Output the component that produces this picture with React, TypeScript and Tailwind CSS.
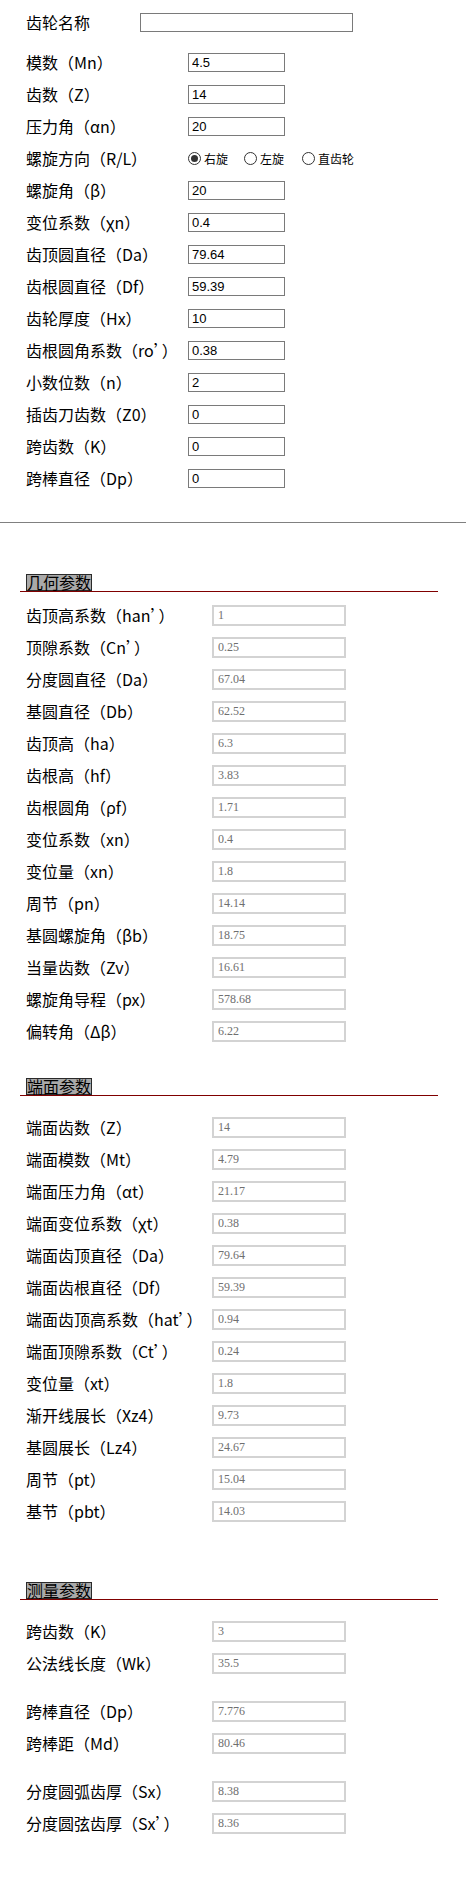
import React from "react";

const inputRows1: [string, string][] = [
  ["模数（Mn）", "4.5"],
  ["齿数（Z）", "14"],
  ["压力角（αn）", "20"],
];
const inputRows1b: [string, string][] = [
  ["螺旋角（β）", "20"],
  ["变位系数（χn）", "0.4"],
  ["齿顶圆直径（Da）", "79.64"],
  ["齿根圆直径（Df）", "59.39"],
  ["齿轮厚度（Hx）", "10"],
  ["齿根圆角系数（ro’）", "0.38"],
  ["小数位数（n）", "2"],
  ["插齿刀齿数（Z0）", "0"],
  ["跨齿数（K）", "0"],
  ["跨棒直径（Dp）", "0"],
];

const geo: [string, string][] = [
  ["齿顶高系数（han’）", "1"],
  ["顶隙系数（Cn’）", "0.25"],
  ["分度圆直径（Da）", "67.04"],
  ["基圆直径（Db）", "62.52"],
  ["齿顶高（ha）", "6.3"],
  ["齿根高（hf）", "3.83"],
  ["齿根圆角（ρf）", "1.71"],
  ["变位系数（xn）", "0.4"],
  ["变位量（xn）", "1.8"],
  ["周节（pn）", "14.14"],
  ["基圆螺旋角（βb）", "18.75"],
  ["当量齿数（Zv）", "16.61"],
  ["螺旋角导程（px）", "578.68"],
  ["偏转角（Δβ）", "6.22"],
];

const face: [string, string][] = [
  ["端面齿数（Z）", "14"],
  ["端面模数（Mt）", "4.79"],
  ["端面压力角（αt）", "21.17"],
  ["端面变位系数（χt）", "0.38"],
  ["端面齿顶直径（Da）", "79.64"],
  ["端面齿根直径（Df）", "59.39"],
  ["端面齿顶高系数（hat’）", "0.94"],
  ["端面顶隙系数（Ct’）", "0.24"],
  ["变位量（xt）", "1.8"],
  ["渐开线展长（Xz4）", "9.73"],
  ["基圆展长（Lz4）", "24.67"],
  ["周节（pt）", "15.04"],
  ["基节（pbt）", "14.03"],
];

function EditRow({ label, value }: { label: string; value: string }) {
  return (
    <div className="flex h-8 items-start pt-[6px]">
      <div className="w-[162px] text-[16px] leading-[19px] text-black whitespace-nowrap">{label}</div>
      <input
        readOnly
        value={value}
        className="h-[19px] w-[97px] border border-[#7a7a7a] bg-white px-[3px] font-['Liberation_Sans',sans-serif] text-[13px] leading-[17px] text-black outline-none"
      />
    </div>
  );
}

function ResultRow({ label, value }: { label: string; value: string }) {
  return (
    <div className="flex h-8 items-start pt-[5px]">
      <div className="w-[186px] text-[16px] leading-[21px] text-black whitespace-nowrap">{label}</div>
      <input
        readOnly
        value={value}
        className="h-[21px] w-[134px] border-2 border-[#d3d3d3] bg-white pl-[4px] font-['Liberation_Serif',serif] text-[12px] leading-[17px] text-[#6f6f6f] outline-none"
      />
    </div>
  );
}

function Heading({ text, className }: { text: string; className: string }) {
  return (
    <div className={`ml-[20px] flex w-[418px] items-end border-b border-[#800000] pl-[6px] ${className}`}>
      <span className="inline-block h-[17px] border border-[#2a2a2a] bg-[#a9a9a9] text-[16px] leading-[15px] text-black">
        {text}
      </span>
    </div>
  );
}

function Radio({ checked, label }: { checked?: boolean; label: string }) {
  return (
    <div className="flex items-center">
      <span className="flex h-[13px] w-[13px] items-center justify-center rounded-full border border-[#333] bg-white">
        {checked && <span className="h-[7px] w-[7px] rounded-full bg-[#333]" />}
      </span>
      <span className="ml-[3px] text-[12px] leading-[19px] text-black">{label}</span>
    </div>
  );
}

export default function App() {
  return (
    <div className="min-h-[1879px] w-full bg-white font-['Noto_Sans_CJK_SC',sans-serif]">
      <div className="pl-[26px] pt-[7px]">
        <div className="flex h-8 items-start pt-[6px]">
          <div className="w-[114px] text-[16px] leading-[19px] text-black">齿轮名称</div>
          <input
            readOnly
            value=""
            className="h-[19px] w-[213px] border border-[#7a7a7a] bg-white outline-none"
          />
        </div>
        <div className="mt-2">
          {inputRows1.map(([l, v]) => (
            <EditRow key={l} label={l} value={v} />
          ))}
          <div className="flex h-8 items-start pt-[6px]">
            <div className="w-[162px] text-[16px] leading-[19px] text-black whitespace-nowrap">螺旋方向（R/L）</div>
            <div className="flex h-[19px] items-center">
              <Radio checked label="右旋" />
              <div className="ml-[16px]">
                <Radio label="左旋" />
              </div>
              <div className="ml-[18px]">
                <Radio label="直齿轮" />
              </div>
            </div>
          </div>
          {inputRows1b.map(([l, v]) => (
            <EditRow key={l} label={l} value={v} />
          ))}
        </div>
      </div>

      <div className="mt-[27px] h-px w-full bg-[#808080]" />

      <Heading text="几何参数" className="mt-[51px]" />
      <div className="mt-[8px] pl-[26px]">
        {geo.map(([l, v], i) => (
          <ResultRow key={i} label={l} value={v} />
        ))}
      </div>

      <Heading text="端面参数" className="mt-[30px]" />
      <div className="mt-[16px] pl-[26px]">
        {face.map(([l, v], i) => (
          <ResultRow key={i} label={l} value={v} />
        ))}
      </div>

      <Heading text="测量参数" className="mt-[54px]" />
      <div className="mt-[16px] pl-[26px]">
        <ResultRow label="跨齿数（K）" value="3" />
        <ResultRow label="公法线长度（Wk）" value="35.5" />
        <div className="mt-4">
          <ResultRow label="跨棒直径（Dp）" value="7.776" />
          <ResultRow label="跨棒距（Md）" value="80.46" />
        </div>
        <div className="mt-4">
          <ResultRow label="分度圆弧齿厚（Sx）" value="8.38" />
          <ResultRow label="分度圆弦齿厚（Sx’）" value="8.36" />
        </div>
      </div>
    </div>
  );
}
